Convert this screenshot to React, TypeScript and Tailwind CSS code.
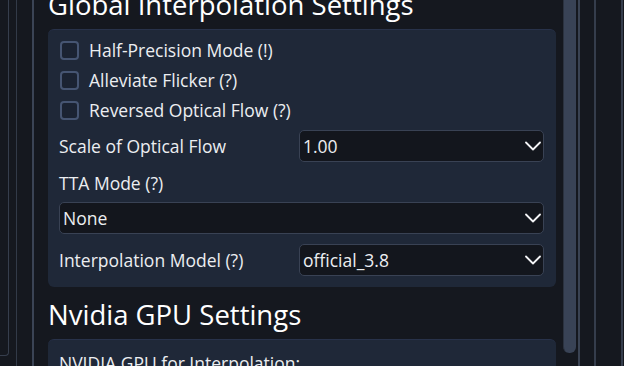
import React from 'react';

function Chevron() {
  return (
    <svg width="16" height="10" viewBox="0 0 16 10" className="shrink-0">
      <polyline points="1,1.5 8,8.5 15,1.5" fill="none" stroke="#f3f4f6" strokeWidth="1.8" strokeLinecap="round" strokeLinejoin="round" />
    </svg>
  );
}

function Select({ value, className = '' }: { value: string; className?: string }) {
  return (
    <div
      className={`flex h-[32px] items-center justify-between rounded-[5px] border-[1.5px] border-[#394254] bg-[#13161d] pl-[3px] pr-[2px] text-[#eceef1] ${className}`}
    >
      <span>{value}</span>
      <Chevron />
    </div>
  );
}

function Checkbox({ label }: { label: string }) {
  return (
    <div className="flex h-[30px] items-center gap-[10px] pl-px">
      <span className="h-[19px] w-[19px] shrink-0 rounded-[4px] border-2 border-[#465572] bg-[#1b2332]" />
      <span>{label}</span>
    </div>
  );
}

export default function App() {
  return (
    <div className="flex h-[366px] w-[624px] overflow-hidden bg-[#15181f] font-['Open_Sans',sans-serif] text-[17.5px] leading-[24px] text-[#eceef1]">
      {/* left edges of neighbouring panels */}
      <div className="h-[356px] w-[9px] shrink-0 rounded-br-[4px] border-b border-r border-[#363e4d]" />
      <div className="ml-[7px] w-px shrink-0 bg-[#323a48]" />
      <div className="ml-[15px] w-[2px] shrink-0 bg-[#3b4455]" />

      <main className="ml-[14px] mt-[-13px] flex w-[508px] shrink-0 flex-col">
        <h2 className="h-[34px] whitespace-nowrap pt-[2px] text-[27.5px] leading-[32px] text-white">Global Interpolation Settings</h2>
        <section className="mt-[8px] flex flex-col rounded-[6px] border-t border-[#28324a] bg-[#1f2838] pb-[11px] pl-[11px] pr-[12px] pt-[5px]">
          <Checkbox label="Half-Precision Mode (!)" />
          <Checkbox label="Alleviate Flicker (?)" />
          <Checkbox label="Reversed Optical Flow (?)" />
          <div className="mt-[5px] flex items-center">
            <span className="w-[240px] shrink-0">Scale of Optical Flow</span>
            <Select value="1.00" className="flex-1" />
          </div>
          <div className="mt-[2px] flex h-[38px] items-center">TTA Mode (?)</div>
          <Select value="None" />
          <div className="mt-[10px] flex items-center">
            <span className="w-[240px] shrink-0">Interpolation Model (?)</span>
            <Select value="official_3.8" className="flex-1" />
          </div>
        </section>

        <h2 className="mt-[10px] h-[34px] pt-[2px] text-[27.5px] leading-[32px] text-white">Nvidia GPU Settings</h2>
        <section className="mt-[8px] flex flex-col rounded-[6px] border-t border-[#28324a] bg-[#1f2838] pl-[11px] pr-[12px] pt-[8px]">
          <div className="flex h-[30px] items-center">NVIDIA GPU for Interpolation:</div>
        </section>
      </main>

      {/* scrollbar */}
      <div className="ml-[7px] w-[13px] shrink-0">
        <div className="h-[353px] rounded-b-[6px] border-l border-[#2b323f] bg-[#394356]" />
      </div>

      {/* right edges */}
      <div className="ml-[2px] w-[2px] shrink-0 bg-[#3a4353]" />
      <div className="ml-[14px] w-[2px] shrink-0 bg-[#353d4c]" />
      <div className="ml-[25px] w-[2px] shrink-0 bg-[#353d4c]" />
    </div>
  );
}
